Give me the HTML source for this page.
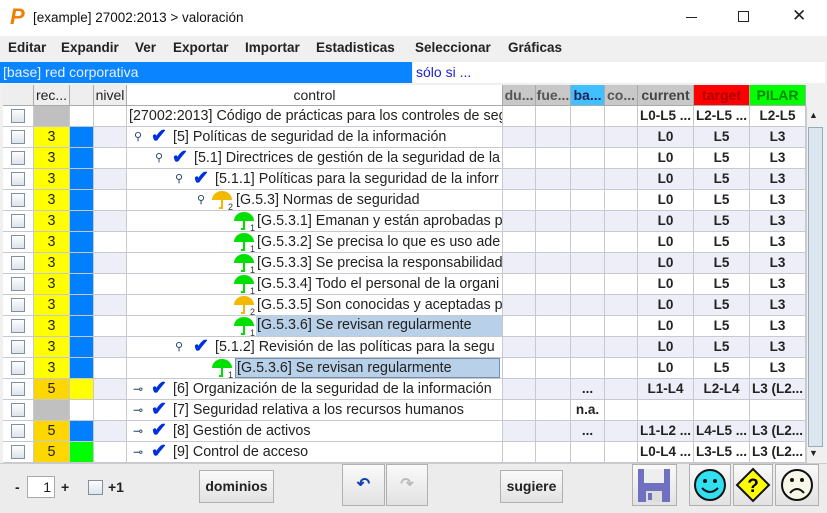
<!DOCTYPE html>
<html><head><meta charset="utf-8">
<style>
*{box-sizing:border-box;margin:0;padding:0}
body{width:827px;height:513px;background:#f0f0f0;font-family:"Liberation Sans",sans-serif;position:relative;overflow:hidden;font-size:13px;color:#222}
.abs{position:absolute}
.title{top:0;left:0;width:827px;height:36px;background:#fff}
.menu{top:36px;left:0;width:827px;height:24px;background:#f0f0f0;font-weight:bold;font-size:13.5px;color:#222}
.menu span{position:absolute;top:4px}
.r{position:absolute;left:3px;width:803px;height:21px;display:grid;grid-template-columns:31px 36px 24px 33px 376px 33px 35px 34px 33px 56px 56px 56px;border-bottom:1px solid #c8c8d0}
.r>div{border-right:1px solid #c8c8d0;height:20px;line-height:20px;white-space:nowrap;overflow:hidden;font-size:14.3px}
.w{background:#fff}.l{background:#eeeef8}
.cb{display:flex;align-items:center;justify-content:center}
.cb i{display:block;width:14px;height:14px;border:1px solid #8090a0;background:linear-gradient(#fdfdfd,#dde4ec)}
.y{background:#ffff00;text-align:center}.o{background:#ffd700;text-align:center}.g{background:#c0c0c0}
.bl{background:#0080ff}.yl{background:#ffff00}.gr{background:#00ff00}
.b{font-weight:bold;text-align:center}
.r>div.b{font-size:13.5px}
.ctl{position:relative}
.ctl span{position:absolute;top:0}
.sel{background:#b8d0e8;border:1px solid #7090b0;line-height:18px;padding-left:1px}
.hd{position:absolute;top:85px;left:3px;height:21px;width:803px;display:grid;grid-template-columns:31px 36px 24px 33px 376px 33px 35px 34px 33px 56px 56px 56px;background:#eeeeee;border-bottom:1px solid #aaa}
.hd>div{border-right:1px solid #aaa;text-align:center;line-height:20px;font-size:14px;overflow:hidden;white-space:nowrap}
.btn{position:absolute;border:1px solid #b0b0b0;background:linear-gradient(#fafafa,#e2e2e2);font-weight:bold;font-size:14px;text-align:center;color:#222}
.ck{color:#0030e0;font-weight:bold;font-size:19px;line-height:20px}
</style></head><body>
<div class="abs title">
 <div class="abs" style="left:10px;top:4px;font:bold italic 22px 'Liberation Sans';color:#f08000">P</div>
 <div class="abs" style="left:33px;top:10px;font-size:13.5px;color:#111">[example] 27002:2013 &gt; valoración</div>
 <div class="abs" style="left:686px;top:17px;width:11px;height:1px;background:#222"></div>
 <div class="abs" style="left:738px;top:11px;width:11px;height:11px;border:1px solid #222"></div>
 <div class="abs" style="left:792px;top:6px;font-size:17px;color:#222">✕</div>
</div>
<div class="abs menu">
 <span style="left:8px">Editar</span><span style="left:61px">Expandir</span><span style="left:135px">Ver</span><span style="left:173px">Exportar</span><span style="left:245px">Importar</span><span style="left:316px">Estadisticas</span><span style="left:415px">Seleccionar</span><span style="left:508px">Gráficas</span>
</div>
<div class="abs" style="left:0;top:62px;width:412px;height:21px;background:#0a84ff;color:#e8f0ff;font-size:14px;line-height:21px;padding-left:3px">[base] red corporativa</div>
<div class="abs" style="left:413px;top:62px;width:412px;height:21px;background:#fff;color:#2020d0;font-size:14px;line-height:21px;padding-left:3px">sólo si ...</div>
<div class="hd">
 <div></div><div>rec...</div><div></div><div>nivel</div><div style="background:#fff">control</div>
 <div style="background:#c8c8c8;font-weight:bold;color:#555">du...</div><div style="background:#c8c8c8;font-weight:bold;color:#555">fue...</div><div style="background:#40c0ff;font-weight:bold;color:#225">ba...</div><div style="background:#c8c8c8;font-weight:bold;color:#555">co...</div><div style="background:#c8c8c8;font-weight:bold;color:#444">current</div><div style="background:#ff0000;font-weight:bold;color:#a00">target</div><div style="background:#00ff00;font-weight:bold;color:#080">PILAR</div>
</div>

<div class="r w" style="top:106px"><div class="cb"><i></i></div><div class="g"></div><div></div><div></div><div class="ctl"><span style="left:2px">[27002:2013] Código de prácticas para los controles de seguridad</span></div><div></div><div></div><div></div><div></div><div class="b">L0-L5 ...</div><div class="b">L2-L5 ...</div><div class="b">L2-L5</div></div>

<div class="r l" style="top:127px"><div class="cb w"><i></i></div><div class="y">3</div><div class="bl"></div><div></div><div class="ctl w"><span style="left:7px;color:#246;font-size:11px">⚲</span><span class="ck" style="left:24px">✔</span><span style="left:46px">[5] Políticas de seguridad de la información</span></div><div></div><div></div><div></div><div></div><div class="b">L0</div><div class="b">L5</div><div class="b">L3</div></div>

<div class="r w" style="top:148px"><div class="cb"><i></i></div><div class="y">3</div><div class="bl"></div><div></div><div class="ctl"><span style="left:28px;color:#246;font-size:11px">⚲</span><span class="ck" style="left:45px">✔</span><span style="left:67px">[5.1] Directrices de gestión de la seguridad de la</span></div><div></div><div></div><div></div><div></div><div class="b">L0</div><div class="b">L5</div><div class="b">L3</div></div>

<div class="r l" style="top:169px"><div class="cb w"><i></i></div><div class="y">3</div><div class="bl"></div><div></div><div class="ctl w"><span style="left:48px;color:#246;font-size:11px">⚲</span><span class="ck" style="left:66px">✔</span><span style="left:88px">[5.1.1] Políticas para la seguridad de la inforr</span></div><div></div><div></div><div></div><div></div><div class="b">L0</div><div class="b">L5</div><div class="b">L3</div></div>

<div class="r w" style="top:190px"><div class="cb"><i></i></div><div class="y">3</div><div class="bl"></div><div></div><div class="ctl"><span style="left:70px;color:#246;font-size:11px">⚲</span><svg class="abs" style="left:84px;top:0" width="26" height="21"><path d="M1 10A10 9 0 0 1 21 10Z" fill="#f5b800"/><path d="M11 10V18H8" stroke="#f5b800" stroke-width="2" fill="none"/><text x="17" y="20" font-size="9" font-family="Liberation Sans" fill="#333">2</text></svg><span style="left:109px">[G.5.3] Normas de seguridad</span></div><div></div><div></div><div></div><div></div><div class="b">L0</div><div class="b">L5</div><div class="b">L3</div></div>

<div class="r l" style="top:211px"><div class="cb w"><i></i></div><div class="y">3</div><div class="bl"></div><div></div><div class="ctl w"><svg class="abs" style="left:106px;top:0" width="26" height="21"><path d="M1 10A10 9 0 0 1 21 10Z" fill="#00e000"/><path d="M11 10V18H8" stroke="#00e000" stroke-width="2" fill="none"/><text x="17" y="20" font-size="9" font-family="Liberation Sans" fill="#333">1</text></svg><span style="left:130px">[G.5.3.1] Emanan y están aprobadas p</span></div><div></div><div></div><div></div><div></div><div class="b">L0</div><div class="b">L5</div><div class="b">L3</div></div>

<div class="r w" style="top:232px"><div class="cb"><i></i></div><div class="y">3</div><div class="bl"></div><div></div><div class="ctl"><svg class="abs" style="left:106px;top:0" width="26" height="21"><path d="M1 10A10 9 0 0 1 21 10Z" fill="#00e000"/><path d="M11 10V18H8" stroke="#00e000" stroke-width="2" fill="none"/><text x="17" y="20" font-size="9" font-family="Liberation Sans" fill="#333">1</text></svg><span style="left:130px">[G.5.3.2] Se precisa lo que es uso ade</span></div><div></div><div></div><div></div><div></div><div class="b">L0</div><div class="b">L5</div><div class="b">L3</div></div>

<div class="r l" style="top:253px"><div class="cb w"><i></i></div><div class="y">3</div><div class="bl"></div><div></div><div class="ctl w"><svg class="abs" style="left:106px;top:0" width="26" height="21"><path d="M1 10A10 9 0 0 1 21 10Z" fill="#00e000"/><path d="M11 10V18H8" stroke="#00e000" stroke-width="2" fill="none"/><text x="17" y="20" font-size="9" font-family="Liberation Sans" fill="#333">1</text></svg><span style="left:130px">[G.5.3.3] Se precisa la responsabilidad</span></div><div></div><div></div><div></div><div></div><div class="b">L0</div><div class="b">L5</div><div class="b">L3</div></div>

<div class="r w" style="top:274px"><div class="cb"><i></i></div><div class="y">3</div><div class="bl"></div><div></div><div class="ctl"><svg class="abs" style="left:106px;top:0" width="26" height="21"><path d="M1 10A10 9 0 0 1 21 10Z" fill="#00e000"/><path d="M11 10V18H8" stroke="#00e000" stroke-width="2" fill="none"/><text x="17" y="20" font-size="9" font-family="Liberation Sans" fill="#333">1</text></svg><span style="left:130px">[G.5.3.4] Todo el personal de la organi</span></div><div></div><div></div><div></div><div></div><div class="b">L0</div><div class="b">L5</div><div class="b">L3</div></div>

<div class="r l" style="top:295px"><div class="cb w"><i></i></div><div class="y">3</div><div class="bl"></div><div></div><div class="ctl w"><svg class="abs" style="left:106px;top:0" width="26" height="21"><path d="M1 10A10 9 0 0 1 21 10Z" fill="#f5b800"/><path d="M11 10V18H8" stroke="#f5b800" stroke-width="2" fill="none"/><text x="17" y="20" font-size="9" font-family="Liberation Sans" fill="#333">2</text></svg><span style="left:130px">[G.5.3.5] Son conocidas y aceptadas p</span></div><div></div><div></div><div></div><div></div><div class="b">L0</div><div class="b">L5</div><div class="b">L3</div></div>

<div class="r w" style="top:316px"><div class="cb"><i></i></div><div class="y">3</div><div class="bl"></div><div></div><div class="ctl"><svg class="abs" style="left:106px;top:0" width="26" height="21"><path d="M1 10A10 9 0 0 1 21 10Z" fill="#00e000"/><path d="M11 10V18H8" stroke="#00e000" stroke-width="2" fill="none"/><text x="17" y="20" font-size="9" font-family="Liberation Sans" fill="#333">1</text></svg><span class="sel" style="left:129px;width:247px;height:20px;border:none">[G.5.3.6] Se revisan regularmente</span></div><div></div><div></div><div></div><div></div><div class="b">L0</div><div class="b">L5</div><div class="b">L3</div></div>

<div class="r l" style="top:337px"><div class="cb w"><i></i></div><div class="y">3</div><div class="bl"></div><div></div><div class="ctl w"><span style="left:48px;color:#246;font-size:11px">⚲</span><span class="ck" style="left:66px">✔</span><span style="left:88px">[5.1.2] Revisión de las políticas para la segu</span></div><div></div><div></div><div></div><div></div><div class="b">L0</div><div class="b">L5</div><div class="b">L3</div></div>

<div class="r w" style="top:358px"><div class="cb"><i></i></div><div class="y">3</div><div class="bl"></div><div></div><div class="ctl"><svg class="abs" style="left:84px;top:0" width="26" height="21"><path d="M1 10A10 9 0 0 1 21 10Z" fill="#00e000"/><path d="M11 10V18H8" stroke="#00e000" stroke-width="2" fill="none"/><text x="17" y="20" font-size="9" font-family="Liberation Sans" fill="#333">1</text></svg><span class="sel" style="left:108px;width:265px;height:20px">[G.5.3.6] Se revisan regularmente</span></div><div></div><div></div><div></div><div></div><div class="b">L0</div><div class="b">L5</div><div class="b">L3</div></div>

<div class="r l" style="top:379px"><div class="cb w"><i></i></div><div class="o">5</div><div class="yl"></div><div></div><div class="ctl w"><span style="left:6px;color:#246;font-size:12px">⊸</span><span class="ck" style="left:24px">✔</span><span style="left:46px">[6] Organización de la seguridad de la información</span></div><div></div><div></div><div class="b">...</div><div></div><div class="b">L1-L4</div><div class="b">L2-L4</div><div class="b">L3 (L2...</div></div>

<div class="r w" style="top:400px"><div class="cb"><i></i></div><div class="g"></div><div></div><div></div><div class="ctl"><span style="left:6px;color:#246;font-size:12px">⊸</span><span class="ck" style="left:24px">✔</span><span style="left:46px">[7] Seguridad relativa a los recursos humanos</span></div><div></div><div></div><div class="b">n.a.</div><div></div><div></div><div></div><div></div></div>

<div class="r l" style="top:421px"><div class="cb w"><i></i></div><div class="o">5</div><div class="bl"></div><div></div><div class="ctl w"><span style="left:6px;color:#246;font-size:12px">⊸</span><span class="ck" style="left:24px">✔</span><span style="left:46px">[8] Gestión de activos</span></div><div></div><div></div><div class="b">...</div><div></div><div class="b">L1-L2 ...</div><div class="b">L4-L5 ...</div><div class="b">L3 (L2...</div></div>

<div class="r w" style="top:442px"><div class="cb"><i></i></div><div class="o">5</div><div class="gr"></div><div></div><div class="ctl"><span style="left:6px;color:#246;font-size:12px">⊸</span><span class="ck" style="left:24px">✔</span><span style="left:46px">[9] Control de acceso</span></div><div></div><div></div><div></div><div></div><div class="b">L0-L4 ...</div><div class="b">L3-L5 ...</div><div class="b">L3 (L2...</div></div>

<div class="abs" style="left:806px;top:106px;width:19px;height:357px;background:#f0f0f0;border-left:1px solid #ccc"></div>
<div class="abs" style="left:809px;top:110px;font-size:9px">▲</div>
<div class="abs" style="left:808px;top:127px;width:15px;height:320px;background:#dce6f0;border:1px solid #9ab"></div>
<div class="abs" style="left:809px;top:448px;font-size:9px">▼</div>

<div class="abs" style="left:0;top:463px;width:827px;height:50px;background:#ececec;border-top:1px solid #ccc"></div>
<div class="abs" style="left:15px;top:479px;font-weight:bold;font-size:14px">-</div>
<div class="abs" style="left:27px;top:476px;width:28px;height:22px;background:#fff;border:1px solid #aaa;text-align:right;padding-right:3px;font-size:14px;line-height:20px">1</div>
<div class="abs" style="left:61px;top:479px;font-weight:bold;font-size:14px">+</div>
<div class="abs" style="left:88px;top:480px;width:15px;height:15px;border:1px solid #8090a0;background:linear-gradient(#fdfdfd,#dde4ec)"></div>
<div class="abs" style="left:108px;top:479px;font-weight:bold;font-size:14px">+1</div>
<div class="btn" style="left:199px;top:470px;width:75px;height:33px;line-height:31px">dominios</div>
<div class="btn" style="left:342px;top:464px;width:43px;height:42px;line-height:40px;color:#1040b0;font-size:16px">↶</div>
<div class="btn" style="left:386px;top:464px;width:42px;height:42px;line-height:40px;color:#bbb;font-size:16px">↷</div>
<div class="btn" style="left:500px;top:470px;width:63px;height:33px;line-height:31px">sugiere</div>
<div class="btn" style="left:632px;top:464px;width:45px;height:42px"><svg width="43" height="40"><rect x="5" y="4" width="32" height="33" fill="#7070c0"/><rect x="11" y="4" width="20" height="14" fill="#eee"/><rect x="13" y="26" width="16" height="11" fill="#ddd"/><rect x="15" y="28" width="4" height="7" fill="#7070c0"/></svg></div>
<div class="btn" style="left:689px;top:464px;width:42px;height:42px"><svg width="40" height="40"><circle cx="20" cy="20" r="15" fill="#30e0f0" stroke="#111" stroke-width="2"/><circle cx="15" cy="16" r="2" fill="#111"/><circle cx="25" cy="16" r="2" fill="#111"/><path d="M12 23Q20 31 28 23" stroke="#111" stroke-width="2" fill="none"/></svg></div>
<div class="btn" style="left:733px;top:464px;width:40px;height:42px"><svg width="38" height="40"><path d="M19 4L35 20L19 36L3 20Z" fill="#ffff00" stroke="#111" stroke-width="2"/><text x="19" y="27" text-anchor="middle" font-size="19" font-weight="bold" font-family="Liberation Sans">?</text></svg></div>
<div class="btn" style="left:775px;top:464px;width:44px;height:42px"><svg width="42" height="40"><circle cx="21" cy="20" r="15" fill="#f8f8e8" stroke="#111" stroke-width="2"/><circle cx="16" cy="15" r="2" fill="#111"/><circle cx="26" cy="15" r="2" fill="#111"/><path d="M14 28Q21 20 28 28" stroke="#111" stroke-width="2" fill="none"/></svg></div>
</body></html>
